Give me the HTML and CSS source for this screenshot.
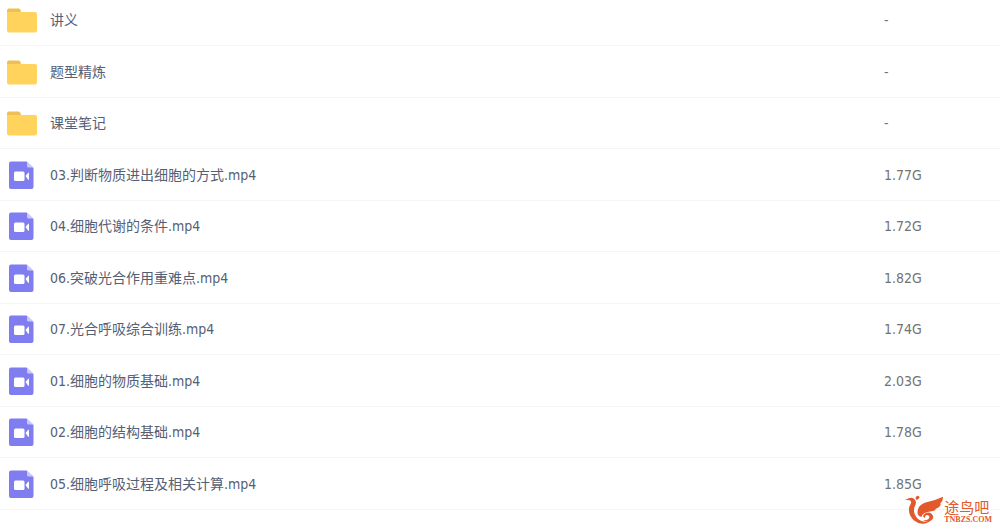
FILE: index.html
```html
<!DOCTYPE html>
<html lang="zh-CN">
<head>
  <meta charset="UTF-8" />
  <meta name="viewport" content="width=device-width, initial-scale=1" />
  <title>文件列表</title>
  <link rel="stylesheet" href="styles.css">
</head>
<body>

  <!-- Shared icons -->
  <svg class="sprite" aria-hidden="true">
    <symbol id="folder" viewBox="0 0 30 28">
      <path d="M0 4.500Q0 2.500 2 2.500H11.500Q13 2.500 13.500 4L14.500 8H0Z" fill="#edbf55"/>
      <path d="M0 7Q0 6 1 6H28Q30 6 30 8V24.500Q30 26.500 28 26.500H2Q0 26.500 0 24.500Z" fill="#ffd35c"/>
    </symbol>
    <symbol id="video" viewBox="0 0 30 28">
      <path d="M4 .5H19.500L26.500 7V26Q26.500 28 24.500 28H4Q2 28 2 26V2.500Q2 .5 4 .5Z" fill="#7f7df0"/>
      <path d="M20 .5L26.500 6.500H21.500Q20 6.500 20 5Z" fill="#c9c8fb"/>
      <rect x="7" y="10.500" width="10.500" height="9.500" rx="1.500" fill="#fff"/>
      <path d="M18.500 15L21 12Q22 11 22 12.500V18Q22 19.500 21 18.500Z" fill="#fff"/>
    </symbol>
  </svg>

  <!-- File list -->
  <table class="file-list">
    <tbody>
      <tr><td class="name"><a href="#"><svg class="icon"><use href="#folder"/></svg>讲义</a></td><td class="size">-</td></tr>
      <tr><td class="name"><a href="#"><svg class="icon"><use href="#folder"/></svg>题型精炼</a></td><td class="size">-</td></tr>
      <tr><td class="name"><a href="#"><svg class="icon"><use href="#folder"/></svg>课堂笔记</a></td><td class="size">-</td></tr>
      <tr><td class="name"><a href="#"><svg class="icon"><use href="#video"/></svg>03.判断物质进出细胞的方式.mp4</a></td><td class="size">1.77G</td></tr>
      <tr><td class="name"><a href="#"><svg class="icon"><use href="#video"/></svg>04.细胞代谢的条件.mp4</a></td><td class="size">1.72G</td></tr>
      <tr><td class="name"><a href="#"><svg class="icon"><use href="#video"/></svg>06.突破光合作用重难点.mp4</a></td><td class="size">1.82G</td></tr>
      <tr><td class="name"><a href="#"><svg class="icon"><use href="#video"/></svg>07.光合呼吸综合训练.mp4</a></td><td class="size">1.74G</td></tr>
      <tr><td class="name"><a href="#"><svg class="icon"><use href="#video"/></svg>01.细胞的物质基础.mp4</a></td><td class="size">2.03G</td></tr>
      <tr><td class="name"><a href="#"><svg class="icon"><use href="#video"/></svg>02.细胞的结构基础.mp4</a></td><td class="size">1.78G</td></tr>
      <tr><td class="name"><a href="#"><svg class="icon"><use href="#video"/></svg>05.细胞呼吸过程及相关计算.mp4</a></td><td class="size">1.85G</td></tr>
    </tbody>
  </table>

  <!-- Watermark -->
  <div class="watermark">
    <svg class="bird" viewBox="138 192 120 87" aria-hidden="true">
      <!-- head and back -->
      <path d="M140 207Q147 206 152 202Q161 197 169 204Q177 212 172 222Q166 234 169 246Q173 262 190 270Q203 275 219 268Q208 279 192 278Q168 275 157 254Q148 234 158 219Q162 210 155 208Q149 206 140 207Z"/>
      <!-- crest -->
      <circle cx="179" cy="199" r="5"/>
      <path d="M172 200L179 197L181 203L176 208Z"/>
      <!-- wing -->
      <path d="M179 248Q176 225 200 215Q228 210 255 197Q256 210 247 217Q250 222 244 227Q240 232 233 233Q234 239 225 240Q212 241 200 246Q192 250 190 258Q181 256 179 248Z"/>
      <!-- tail -->
      <path d="M196 252Q209 240 221 248Q232 260 218 269Q207 275 195 268Q211 268 214 260Q215 252 206 252Q201 253 201 260Q194 260 196 252Z"/>
    </svg>
    <div class="brand">
      <span class="brand-name">途鸟吧</span>
      <span class="brand-url">TNBZS.COM</span>
    </div>
  </div>

</body>
</html>
```
FILE: styles.css
```css
/* Reset & Body */
body {
  margin: 0;
  background: #fff;
  font-family: "DejaVu Sans Condensed", "Noto Sans CJK SC", sans-serif;
  font-size: 14px;
  line-height: 20px;
  overflow-x: hidden;
}

.sprite {
  display: none;
}

/* File list, first row partly scrolled away */
.file-list {
  width: 100%;
  margin-top: -6px;
  border-collapse: separate;
  border-spacing: 0;
}

.file-list td {
  box-sizing: border-box;
  height: 51px;
  padding: 0;
  border-bottom: 1px solid #f3f5f8;
}

.file-list tr:first-child td,
.file-list tr:nth-child(even) td {
  height: 52px;
}

.name a {
  display: flex;
  align-items: center;
  gap: 13px;
  padding-left: 7px;
  color: #566075;
  text-decoration: none;
}

.icon {
  width: 30px;
  height: 28px;
}

.file-list .size {
  width: 12%;
  padding-left: 4px;
  color: #737373;
}

/* Watermark */
.watermark {
  position: absolute;
  right: 8px;
  bottom: 4px;
  display: flex;
  align-items: flex-end;
}

.bird {
  width: 40px;
  height: 29px;
  fill: #e2592c;
}

.brand {
  display: flex;
  flex-direction: column;
  color: #e2592c;
}

.brand-name {
  font-size: 15px;
  line-height: 16px;
}

.brand-url {
  font: bold 8px/8px "Liberation Serif", serif;
}
```
